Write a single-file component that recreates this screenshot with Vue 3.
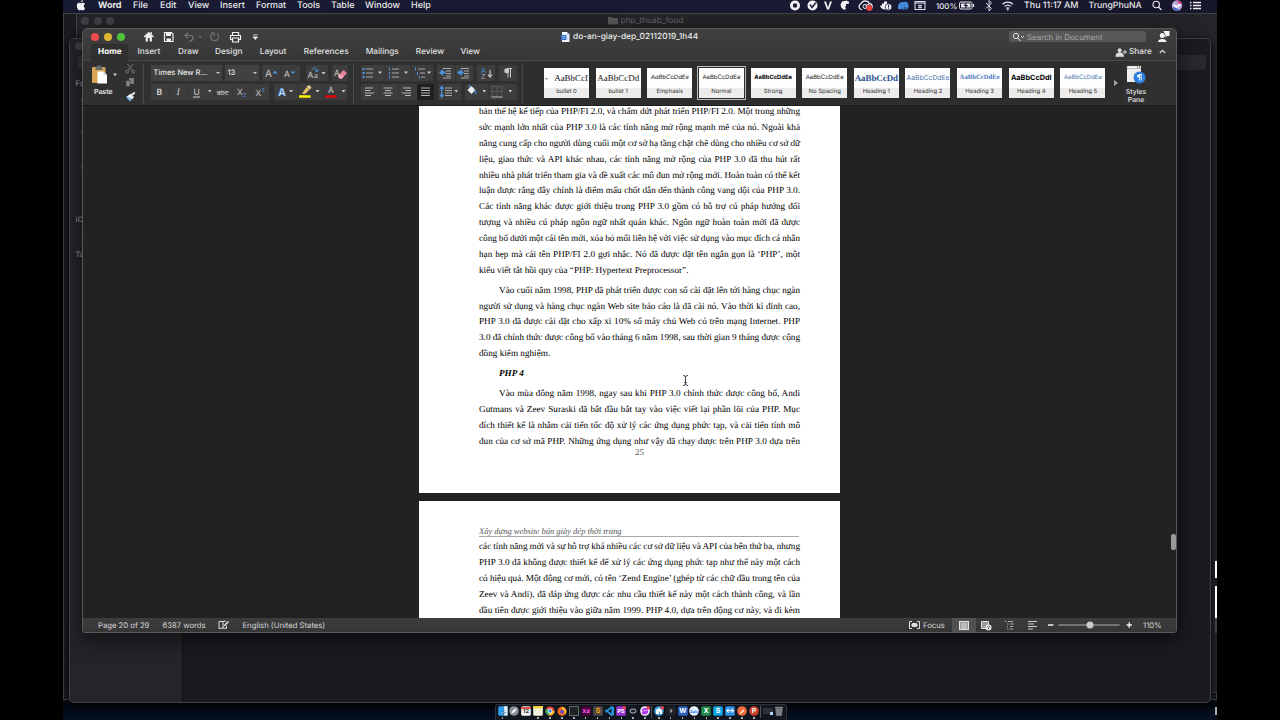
<script setup>
const menus = [
  ['Word', 35], ['File', 27], ['Edit', 28], ['View', 32], ['Insert', 36],
  ['Format', 41], ['Tools', 34], ['Table', 34], ['Window', 46], ['Help', 30],
]
const tabs = [
  ['Home', 39.5], ['Insert', 40.5], ['Draw', 37], ['Design', 44.7], ['Layout', 44],
  ['References', 62], ['Mailings', 50], ['Review', 44.7], ['View', 30],
]
const styles = [
  ['-   AaBbCcI', 'bullet 0', 'serif'],
  ['AaBbCcDd', 'bullet 1', 'serif'],
  ['AaBbCcDdEe', 'Emphasis', 'ital'],
  ['AaBbCcDdEe', 'Normal', ''],
  ['AaBbCcDdEe', 'Strong', 'strong'],
  ['AaBbCcDdEe', 'No Spacing', ''],
  ['AaBbCcDd', 'Heading 1', 'h1'],
  ['AaBbCcDdEe', 'Heading 2', 'h2'],
  ['AaBbCcDdEe', 'Heading 3', 'h3'],
  ['AaBbCcDdI', 'Heading 4', 'h4'],
  ['AaBbCcDdEe', 'Heading 5', 'h5'],
]
const paras = [
  { lines: [
    'bản thế hệ kế tiếp của PHP/FI 2.0, và chấm dứt phát triển PHP/FI 2.0. Một trong những',
    'sức mạnh lớn nhất của PHP 3.0 là các tính năng mở rộng mạnh mẽ của nó. Ngoài khả',
    'năng cung cấp cho người dùng cuối một cơ sở hạ tầng chặt chẽ dùng cho nhiều cơ sở dữ',
    'liệu, giao thức và API khác nhau, các tính năng mở rộng của PHP 3.0 đã thu hút rất',
    'nhiều nhà phát triển tham gia và đề xuất các mô đun mở rộng mới. Hoàn toàn có thể kết',
    'luận được rằng đây chính là điểm mấu chốt dẫn đến thành công vang dội của PHP 3.0.',
    'Các tính năng khác được giới thiệu trong PHP 3.0 gồm có hỗ trợ cú pháp hướng đối',
    'tượng và nhiều cú pháp ngôn ngữ nhất quán khác. Ngôn ngữ hoàn toàn mới đã được',
    'công bố dưới một cái tên mới, xóa bỏ mối liên hệ với việc sử dụng vào mục đích cá nhân',
    'hạn hẹp mà cái tên PHP/FI 2.0 gợi nhắc. Nó đã được đặt tên ngắn gọn là ‘PHP’, một',
    'kiểu viết tắt hồi quy của “PHP: Hypertext Preprocessor”.',
  ], ends: true },
  { indent: true, ends: true, lines: [
    'Vào cuối năm 1998, PHP đã phát triển được con số cài đặt lên tới hàng chục ngàn',
    'người sử dụng và hàng chục ngàn Web site báo cáo là đã cài nó. Vào thời kì đỉnh cao,',
    'PHP 3.0 đã được cài đặt cho xấp xỉ 10% số máy chủ Web có trên mạng Internet. PHP',
    '3.0 đã chính thức được công bố vào tháng 6 năm 1998, sau thời gian 9 tháng được cộng',
    'đồng kiểm nghiệm.',
  ] },
  { indent: true, ends: true, heading: true, lines: ['PHP 4'] },
  { indent: true, lines: [
    'Vào mùa đông năm 1998, ngay sau khi PHP 3.0 chính thức được công bố, Andi',
    'Gutmans và Zeev Suraski đã bắt đầu bắt tay vào việc viết lại phần lõi của PHP. Mục',
    'đích thiết kế là nhằm cải tiến tốc độ xử lý các ứng dụng phức tạp, và cải tiến tính mô',
    'đun của cơ sở mã PHP. Những ứng dụng như vậy đã chạy được trên PHP 3.0 dựa trên',
  ] },
]
const nextLines = [
  'các tính năng mới và sự hỗ trợ khá nhiều các cơ sở dữ liệu và API của bên thứ ba, nhưng',
  'PHP 3.0 đã không được thiết kế để xử lý các ứng dụng phức tạp như thế này một cách',
  'có hiệu quả. Một động cơ mới, có tên ‘Zend Engine’ (ghép từ các chữ đầu trong tên của',
  'Zeev và Andi), đã đáp ứng được các nhu cầu thiết kế này một cách thành công, và lần',
  'đầu tiên được giới thiệu vào giữa năm 1999. PHP 4.0, dựa trên động cơ này, và đi kèm',
]
const dock = [
  ['#2a9df0', '', '#fff', 'finder', 1], ['#888f96', '', '#fff', 'rocket', 0], ['#f4f4f4', '12', '#333', 'cal', 0],
  ['#f5f2dc', '', '#333', 'note', 1], ['#fff', '', '', 'chrome', 1], ['#f36b1c', '', '', 'fox', 1],
  ['#1c2421', '', '#9db', 'term', 1], ['#470137', 'Xd', '#ff61f6', 'txt', 1], ['#4a4a4a', 'S', '#ff9800', 'txt', 1],
  ['#1a1b1e', '', '#2a9df0', 'code', 1], ['#9c35d8', 'PS', '#fff', 'storm', 1], ['#191b22', '', '#a9b4d8', 'eye', 1],
  ['#fff', '', '#c22af0', 'msg', 1], null,
  ['#3f9fe0', '', '#fff', 'mamp', 1], ['#202225', '›', '#ddd', 'txt', 1], ['#2b5fc0', 'W', '#fff', 'txt', 1],
  ['#e9f1ff', 'Zalo', '#1877f2', 'zalo', 1], ['#1f8a4c', 'X', '#fff', 'txt', 1], ['#0fa4e8', 'S', '#fff', 'txt', 1],
  ['#2b8fe8', '↔', '#fff', 'tv', 1], ['#f26b3a', '', '#fff', 'post', 1], ['#c9412b', 'P', '#fff', 'round', 1], null,
  ['#20252b', '', '#9cf', 'mini', 0], ['#73777b', '', '#ccc', 'trash', 0],
]
</script>

<template>
  <div class="screen">
    <header class="menubar">
      <svg class="apple" width="10" height="12" viewBox="0 0 10 12"><path d="M6.900 0c.1 1.200-.9 2.300-2 2.300C4.800 1.200 5.800.2 6.900 0zM9 8.200c-.6 1.500-1.300 2.300-2.100 2.300-.7 0-.9-.4-1.700-.4s-1.100.4-1.700.4C2.300 10.500.8 8.200.8 5.800.8 3.900 2 2.800 3.200 2.800c.8 0 1.400.5 1.900.5s1.200-.6 2.200-.5c.7 0 1.300.3 1.700.9-1.800 1.100-1.500 3.700 0 4.500z" fill="#f2f2f6"/></svg>
      <nav class="menus"><span v-for="[t, w] in menus" :key="t" :style="{ width: w + 'px' }">{{ t }}</span></nav>
      <svg class="tray" width="146" height="13" viewBox="0 0 146 13">
        <g fill="#f0f0f5">
          <circle cx="5" cy="5.500" r="5"/><rect x="3" y="3.500" width="4" height="4" rx=".8" fill="#1a1b33"/>
          <circle cx="22.500" cy="5.500" r="5"/><path d="M20 4.500l2 3 3.800-4.800" stroke="#1a1b33" stroke-width="1.400" fill="none"/>
          <path d="M34 1.500h2l2 6 2-6h2L39 9.500h-2z"/>
          <path d="M50.500 4.500L52 1.500 56.500.5l2.500 1.300v2L56 4v2.500h-1.500L56 8l-1 2Q51 9 50.500 4.500z"/>
          <path d="M72 9.500a3 3 0 0 1-1-5.800 4.500 4.500 0 0 1 8.400 0 2.800 2.800 0 0 1 0 5.600" fill="none" stroke="#f0f0f5" stroke-width="1.200"/><circle cx="75" cy="6.500" r="2" fill="none" stroke="#f0f0f5"/><circle cx="78" cy="6.500" r="2" fill="none" stroke="#f0f0f5"/>
          <path d="M90 5.500h2V3.500h2V1.500h3v3h4v1c-1 3-2.500 4-5.500 4s-5-1.500-5.500-4z"/><circle cx="98.500" cy="7" r="3.300" stroke="#1a1b33" stroke-width=".7"/>
          <path d="M98.500 5v2.600M98.500 8.300v1" stroke="#1a1b33" fill="none"/>
        </g>
        <circle cx="79.500" cy="8" r="3" fill="#e9413d"/>
        <path d="M108 9V5.500C109 2.500 111 1.500 114 2c3-.8 4.500 1 4.500 3.500v2h-1V9.500h-2V7.500l-1-1v3h-2v-2l-1 2z" fill="#4389d9"/>
        <g fill="none" stroke="#e4e4ec"><rect x="125" y="1.500" width="10" height="8"/><path d="M125 3h10M128 5l4 3M132 5l-4 3M130 4.500v4"/></g>
      </svg>
      <span class="pct">100%</span>
      <svg class="stat" width="65" height="13" viewBox="0 0 65 13">
        <g fill="none" stroke="#e9e9ef">
          <rect x=".5" y="2" width="12.500" height="7" rx="1.500"/><path d="M14.500 4v3" stroke-width="1.200"/>
          <path d="M27 3l5.500 5.500L30 11V.5L32.500 3 27 8.500" stroke-width=".9"/>
          <path d="M43.500 4.200a7.500 7.500 0 0 1 10.500 0M45.500 6.400a5 5 0 0 1 6.500 0M47.300 8.300a2.500 2.500 0 0 1 2.900 0" stroke-width="1.200"/>
        </g>
        <rect x="2" y="3.500" width="9.500" height="4" fill="#e9e9ef"/><path d="M7.800 2L4.500 6h2L5.500 9.300 9.300 5H7z" fill="#1a1b33"/>
        <circle cx="48.800" cy="9.500" r=".9" fill="#e9e9ef"/>
      </svg>
      <span class="clock">Thu 11:17 AM</span><span class="user">TrungPhuNA</span>
      <svg class="trail" width="52" height="13" viewBox="0 0 52 13">
        <circle cx="4.200" cy="4.500" r="3.200" fill="none" stroke="#eee" stroke-width="1.100"/><path d="M6.500 7l3 3" stroke="#eee" stroke-width="1.200"/>
        <circle cx="25" cy="5.500" r="5.200" fill="#b7a7d6"/><path d="M21 5.500c2-3 3 1 4 0s2-4 4-1c-1 3-3 2-4 4-1 0-2-2-4-3z" fill="#f2f2ff"/><path d="M20.500 7a5 5 0 0 0 7 3c-2-.5-4-3-7-3z" fill="#3c68d8"/><path d="M25 .5a5 5 0 0 1 5 4l-4-1z" fill="#d94b8d"/>
        <path d="M38 2.500h1.500M38 5.500h1.500M38 8.500h1.500M41 2.500h8M41 5.500h8M41 8.500h8" stroke="#eee" stroke-width="1.300"/>
      </svg>
    </header>

    <div class="win rear"></div>
    <div class="win folder">
      <div class="dots"><i></i><i></i><i></i></div>
      <div class="folder-title"><svg width="10" height="9" viewBox="0 0 10 9"><path d="M0 1h4l1 1h5v6.500H0z" fill="#58595b"/></svg>php_thuab_food</div>
    </div>
    <div class="win finder">
      <aside class="side"><i class="sdot"></i><i class="sfield"></i><b class="s1">Favourites</b><b class="s2">iCloud</b><b class="tags">Tags</b>
        <svg class="sideicons" width="8" height="150" viewBox="0 0 8 150"><path d="M6 3q-3 2 0 5M5 21h3M4 38l3-3M6 50v10M6 67q-2 6 0 10M6 87v7M5 102h2v10H5M6 143q-2 2 0 5" fill="none" stroke="#85868a"/></svg>
      </aside>
      <div class="findermain"><i class="ffield"></i></div>
    </div>
    <div class="sliver a"></div><div class="sliver b"></div><div class="sliver c"></div><div class="sliver d"></div>

    <main class="word">
      <section class="titlebar">
        <div class="lights"><i class="r"></i><i class="y"></i><i class="g"></i></div>
        <svg class="quick" width="118" height="14" viewBox="0 0 118 14">
          <g fill="none" stroke="#f2f2f2" stroke-width="1.200">
            <path d="M1 7l4.800-4.500L10.600 7M8.300 4V2" /><path d="M2.700 6v5.500h2.200V8h1.800v3.500h2.200V6L5.800 3.200z" fill="#f2f2f2" stroke="none"/>
            <path d="M21.500 2.500h7L30 4v7.500h-8.500z"/><path d="M23 3h5v3h-5zM23.500 8.500h4.500V11h-4.500z" fill="#f2f2f2" stroke="none"/>
            <path d="M89.500 5.500V2.500h6v3M89 9.500h-1.500v-4h10v4H96M89.500 8h6v4h-6z"/>
          </g>
          <g fill="none" stroke="#747474" stroke-width="1.200"><path d="M45 2.500L42 5.500l3 3M42 5.500h5a2.500 2.500 0 0 1 1 5l-2 1.200"/><path d="M74 3.500a4 4 0 1 1-5 .2M68 3.200h3.200v3.300"/></g>
          <path d="M55.500 6h3.200l-1.600 2z" fill="#777"/><path d="M110 5h4.500M110 7h4.500l-2.200 2.500z" fill="#eee" stroke="#eee" stroke-width=".8"/>
        </svg>
        <div class="doctitle"><svg width="9" height="10" viewBox="0 0 9 10"><path d="M1 0h5l2.500 2.500V10H1z" fill="#eef5ff"/><path d="M6 0v2.500h2.500z" fill="#9bb8dd"/><rect y="3" width="5.500" height="5" fill="#326fc0"/><path d="M1 4.500h3.500M1 6.300h3.500M5.500 7h2M5.500 5h2" stroke="#a9d0ff" stroke-width=".7"/></svg>do-an-giay-dep_02112019_1h44</div>
        <div class="search"><svg width="15" height="10" viewBox="0 0 15 10"><circle cx="4" cy="4" r="2.600" fill="none" stroke="#ddd"/><path d="M6 6l2.500 3M9 4l1.500 1.500L12 4" fill="none" stroke="#ddd"/></svg>Search in Document</div>
        <svg class="feedback" width="12" height="13" viewBox="0 0 12 13"><circle cx="4.300" cy="5.500" r="2.500" fill="#f5f5f5"/><path d="M0 12c0-4 8.600-4 8.600 0zM5.500 1h6v5H9L7.500 7.500V5z" fill="#f5f5f5"/></svg>
      </section>
      <section class="tabs">
        <span v-for="([t, w], i) in tabs" :key="t" :class="{ on: i === 0 }" :style="{ width: w + 'px' }">{{ t }}</span>
        <div class="share"><svg width="11" height="10" viewBox="0 0 12 10"><circle cx="4" cy="3" r="2.200" fill="#ddd"/><path d="M0 9.500c0-5 8-5 8 0zM7.500 5h4.500M9.700 2.800v4.500" fill="#ddd" stroke="#ddd" stroke-width="1.100"/></svg>Share<svg class="chev" width="7" height="5" viewBox="0 0 7 5"><path d="M.8 4l2.700-2.700L6.200 4" fill="none" stroke="#ddd" stroke-width="1.200"/></svg></div>
      </section>

      <section class="ribbon">
        <div class="clip">
          <svg width="50" height="40" viewBox="0 0 50 40">
            <rect x="0" y="2" width="13.500" height="16" rx="1" fill="#d9a557"/><path d="M3.500 1.500h2a1.500 1.500 0 0 1 3 0h2V5h-7z" fill="#686a6c"/><path d="M5.500 6.500h6l3.500 3.500v8.500H5.500z" fill="#fff"/><path d="M11.500 6.500V10H15z" fill="#cfd3d8"/>
            <path d="M21 8.500h4l-2 2.800z" fill="#ccc"/>
            <g fill="none" stroke="#777" stroke-width="1"><path d="M35.500-1l5 6.500M41-1l-5 6.500"/><circle cx="35.300" cy="6.600" r="1.400"/><circle cx="41.200" cy="6.600" r="1.400"/></g>
            <path d="M37 13h5v6h-5z" fill="#7b7b7b"/><path d="M34 15.500h4v6h-4z" fill="#858585" stroke="#333" stroke-width=".5"/>
            <path d="M34 32l4-3 3.500 3-3.500 4.500z" fill="#86b7ef"/><path d="M35 31.500l3.500-2.500 3.500 3-1.500 2z" fill="#f3f3f3"/><path d="M39 30.500l3.800-3" stroke="#eee" stroke-width="1.900"/>
          </svg>
          <span>Paste</span>
        </div>
        <i class="sep"></i>
        <div class="cols fontcols">
          <div class="row">
            <div class="combo f1">Times New R...<em></em></div>
            <div class="combo f2">13<em></em></div>
            <svg class="grp m3" width="38" height="16"><path d="M19.500 0v16" class="div"/><text x="3" y="12" class="gl">A</text><path d="M10.500 8.500h5L13 5.500z" fill="#4b93e0"/><text x="22" y="12" class="gs">A</text><path d="M28.500 6.500h5L31 9z" fill="#4b93e0"/></svg>
            <svg class="grp m6" width="22" height="16"><text x="1.500" y="12.500" class="gs">A</text><text x="8" y="13" class="gt">a</text><path d="M6 5c2-4 5-2 5 1M9 5l2 2 1.500-2.500" fill="none" stroke="#4b93e0"/><path d="M15.500 7h4l-2 2.500z" fill="#ccc"/></svg>
            <svg class="grp m4" width="16" height="16"><text x="2" y="10.500" class="gs">A</text><path d="M6 11l5.500-6 3.500 3-5 5.500H7.500z" fill="#e8829b"/><path d="M6 11l2-2 3.500 3-1.500 1.500H7.500z" fill="#f4afbf"/></svg>
          </div>
          <div class="row">
            <svg class="grp" width="118" height="16"><path d="M18.500 0v16M37.500 0v16M63.500 0v16M81.500 0v16M100.500 0v16" class="div"/>
              <text x="5.500" y="11.300" class="gb">B</text><text x="25.500" y="11.300" class="gi">I</text><text x="42.500" y="10.500" class="gu">U</text><path d="M42 13h7" stroke="#ccc"/><path d="M57 6h3.500l-1.700 2.500z" fill="#ccc"/>
              <text x="66" y="10.500" class="ge">abc</text><path d="M65.500 8h12.500" stroke="#bbb" stroke-width=".8"/><text x="86" y="10.500" class="gu">X</text><text x="92" y="12.500" class="gq">2</text><text x="104.500" y="11.500" class="gu">X</text><text x="110.500" y="7.500" class="gq">2</text></svg>
            <svg class="grp m5" width="73" height="16"><path d="M24.500 0v16M49.500 0v16" class="div"/><text x="4" y="11.500" class="ga">A</text><path d="M15 6h4l-2 2.500z" fill="#ccc"/>
              <path d="M28 9.500l4.500-6 3 2-4.500 4.500z" fill="#ecc46f"/><path d="M32.500 3l2.500-2L37.500 3.500l-1.500 2z" fill="#e8cf9a"/><path d="M25 12.500h11.500" stroke="#fbf000" stroke-width="2.700"/><path d="M41.500 6h4l-2 2.500z" fill="#ccc"/>
              <text x="54" y="9" class="gs">A</text><path d="M51 12.500h11.500" stroke="#e00a0a" stroke-width="2.700"/><path d="M67.500 6h4l-2 2.500z" fill="#ccc"/></svg>
          </div>
        </div>
        <i class="sep"></i>
        <div class="cols">
          <div class="row">
            <svg class="grp" width="72" height="16"><path d="M24.500 0v16M50.500 0v16" class="div"/>
              <path d="M5 4h7M5 8h7M5 12h7M31 4h7M31 8h7M31 12h7M57 4h7M59 8h5M60 12h4" stroke="#aaa" stroke-width="1.100"/><path d="M1.500 4h2.200M1.500 8h2.200M1.500 12h2.200" stroke="#4b93e0" stroke-width="2"/><path d="M28.500 2.500v3M28.500 7v2.500M28.500 11v2.500M54.500 2.500v3M56.500 7v3M58.500 11v2.500" stroke="#4b93e0"/><path d="M17 6.500h4l-2 2.500zM43 6.500h4l-2 2.500zM66 6.500h4l-2 2.500z" fill="#ccc"/></svg>
            <svg class="grp m4b" width="36" height="16"><path d="M18.500 0v16" class="div"/><path d="M6 3.500h8M9 6h5M9 8.500h5M9 11h5M6 13h8M24 3.500h8M27 6h5M27 8.500h5M27 11h5M24 13h8" stroke="#aaa"/><path d="M2 7.500L6 4v2.200h2.500v2.600H6V11zM27 7.500L23 4v2.200h-2.500v2.600H23V11z" fill="#4b93e0"/></svg>
            <svg class="grp m4b" width="18" height="16"><text x="4" y="7.500" class="gz">A</text><text x="4" y="14" class="gz2">Z</text><path d="M13 5v6.500M11 9.500l2 2.500 2-2.500" fill="none" stroke="#ccc" stroke-width="1.200"/></svg>
            <svg class="grp m4b" width="18" height="16"><path d="M9 3.500v9M11.500 3.500v9M8 3.500h5" stroke="#c9c9c9" fill="none"/><circle cx="7.700" cy="5.700" r="2.500" fill="#c9c9c9"/></svg>
          </div>
          <div class="row">
            <svg class="grp" width="73" height="16"><rect x="56" width="17" height="16" fill="#1f1f1f"/><path d="M18.500 0v16M37.500 0v16" class="div"/><path d="M4 4h8M4 6.500h5.500M4 9h9M4 11.500h6M22.500 4h9M24 6.500h6M22.500 9h9M24 11.500h6M42 4h8M44.500 6.500H50M41 9h9M44 11.500h6M60 4h9M60 6.500h9M60 9h9M60 11.500h9" stroke="#b8b8b8"/></svg>
            <svg class="grp m4b" width="23" height="16"><path d="M7 4h7M7 6.500h7M7 9h7M7 11.500h7" stroke="#aaa"/><path d="M2 5l1.700-2.500L5.500 5M2 10.500l1.700 2.500L5.500 10.500M3.700 3v9.500" fill="none" stroke="#4b93e0" stroke-width="1.300"/><path d="M16.500 6h3.500l-1.700 2.500z" fill="#ccc"/></svg>
            <svg class="grp m4b" width="52" height="16"><path d="M23.500 0v16" class="div"/><path d="M2.500 6l4-4 4 4-4 4z" fill="#eee"/><path d="M4.500 4V1M8.500 6c2 0 2.500 2 2 4" fill="none" stroke="#4b93e0" stroke-width="1.200"/><path d="M17.500 6h3.500l-1.700 2.500zM43.500 6h3.500l-1.700 2.500z" fill="#ccc"/><path d="M27 2.500h10v9M32 2.500v10M27 2.500v10M27 7.500h10" fill="none" stroke="#666" stroke-width=".7"/><path d="M26.500 13h11" stroke="#bbb"/></svg>
          </div>
        </div>
        <i class="sep last-sep"></i>
        <div class="gallery">
          <div v-for="([s, n, k], i) in styles" :key="n" class="card" :class="[k, { sel: i === 3 }]"><div class="prev"><span>{{ s }}</span></div><div class="name">{{ n }}</div></div>
          <svg width="5" height="6" viewBox="0 0 5 6" class="more"><path d="M0 0l4 3L0 6z" fill="#a5a5a5"/></svg>
        </div>
        <div class="pane"><svg width="20" height="20" viewBox="0 0 20 20"><rect x="1" y="1" width="14" height="16" fill="#efefef"/><path d="M1 1h14v2.500H1z" fill="#fff" stroke="#777" stroke-width=".5"/><path d="M11 2.200h1M13 2.200h1" stroke="#444"/><circle cx="13.500" cy="12.500" r="6" fill="#2f7fe0"/><path d="M13.500 9.500v6M15.200 9.500v6M13 9.500h3" stroke="#fff" stroke-width=".9"/><circle cx="12.500" cy="11" r="1.500" fill="#fff"/></svg><span>Styles<br>Pane</span></div>
      </section>

      <section class="doc">
        <article class="page p1">
          <p v-for="(p, pi) in paras" :key="pi" :class="{ indent: p.indent, heading: p.heading }">
            <span v-for="(l, i) in p.lines" :key="i" class="line" :class="{ last: p.ends && i === p.lines.length - 1 }">{{ l }}</span>
          </p>
          <div class="num">25</div>
        </article>
        <article class="page p2">
          <div class="head">Xây dựng website bán giày dép thời trang</div>
          <p><span v-for="l in nextLines" :key="l" class="line">{{ l }}</span></p>
        </article>
        <i class="thumb"></i>
        <svg class="caret" width="7" height="11" viewBox="0 0 7 11"><path d="M1 .5q2.500 0 2.500 1.500Q3.500.5 6 .5M1 10.500q2.500 0 2.500-1.500 0 1.500 2.500 1.500M3.500 2v7M2.200 7.500h2.600" fill="none" stroke="#333" stroke-width=".9"/></svg>
      </section>

      <footer class="status">
        <span class="w1">Page 20 of 29</span><span class="w2">6387 words</span>
        <svg class="book" width="12" height="10" viewBox="0 0 12 10"><path d="M8.500 5.500V8.500L5 8 1 8.500v-7L5 1.500v7M5 1.500L8 1" fill="none" stroke="#ddd"/><path d="M5.500 6.500l1-2 3.500-3.500 1 1-3.500 3.500z" fill="#eee"/></svg>
        <span>English (United States)</span>
        <div class="views">
          <svg width="11" height="8" viewBox="0 0 11 8"><path d="M3 .5H.5v7H3M8 .5h2.500v7H8" fill="none" stroke="#ddd"/><rect x="2.500" y="2" width="6" height="4" rx="1.500" fill="#ddd"/></svg><span class="focus">Focus</span>
          <div class="vsel"><svg width="10" height="9" viewBox="0 0 10 9"><rect x=".5" y=".5" width="9" height="8" fill="#999" stroke="#e2e2e2"/><path d="M2 3h6M2 5h6M2 7h6" stroke="#f0f0f0" stroke-width=".8"/></svg></div>
          <svg class="vicons" width="66" height="11" viewBox="0 0 66 11"><path d="M6.500 1.500h7v7h-7z" fill="#999" stroke="#ddd"/><circle cx="13.500" cy="7.500" r="3" fill="#eee"/><path d="M12 6.500l1.500 1v2M14 5.500l1 2" stroke="#444" stroke-width=".8" fill="none"/><path d="M30 1.500h1.500M33 1.500h5M32 4h1.500M35 4h4M32 6.500h1M35 6.500h3M32 9h1.500M35 9h3" stroke="#aaa" stroke-width="1.200"/><path d="M53 1.500h9M53 4h6M53 6.500h9M53 9h5" stroke="#ccc" stroke-width="1.200"/></svg>
          <svg width="85" height="10" viewBox="0 0 85 10"><path d="M1 5h5.500M79.500 5h5.500M82.200 2.300v5.400" stroke="#eee" stroke-width="1.400"/><path d="M12 5h60" stroke="#747474" stroke-width="1.800" stroke-linecap="round"/><circle cx="43" cy="5" r="3.500" fill="#ccc"/></svg>
          <span class="zoom">110%</span>
        </div>
      </footer>
    </main>

    <footer class="dock">
      <template v-for="(d, i) in dock" :key="i">
        <i v-if="!d" class="dsep"></i>
        <div v-else class="app" :class="{ run: d[4] }">
          <svg width="10" height="10" viewBox="0 0 10 10">
            <template v-if="d[3] === 'chrome'"><circle cx="5" cy="5" r="4.600" fill="#e84435"/><path d="M5 5L1 2.700A4.600 4.600 0 0 0 4 9.500z" fill="#34a853"/><path d="M5 5h4.600A4.600 4.600 0 0 1 4 9.500z" fill="#fbc116"/><circle cx="5" cy="5" r="2.100" fill="#4285f4" stroke="#fff" stroke-width=".8"/></template>
            <template v-else-if="d[3] === 'fox'"><circle cx="5" cy="5.300" r="4.500" fill="#f36b1c"/><path d="M5 1c4 1 5 4 3.500 7C7 6 8 4 5 3z" fill="#ffcb35"/><circle cx="5" cy="5.800" r="2" fill="#6b48c8"/></template>
            <template v-else-if="d[3] === 'code'"><path d="M7.500 0L10 1v8l-2.500 1L1 4.500 2 3.300 7.500 7.500v-5L2 6.700 1 5.500z" fill="#2595df"/></template>
            <template v-else-if="d[3] === 'trash'"><path d="M1 1h8L8 10H2z" fill="#65696d"/><path d="M1 1.200h8M3 3l.5 6M5 3v6M7 3l-.5 6" stroke="#aaa" stroke-width=".6"/></template>
            <template v-else-if="d[3] === 'mini'"><rect y="2" width="10" height="6" fill="#2b3138"/><rect x="7" y="6" width="3" height="3" fill="#b7d7f4"/></template>
            <template v-else>
              <circle v-if="['rocket','msg','mamp','post','round','zalo'].includes(d[3])" cx="5" cy="5" r="4.800" :fill="d[0]"/>
              <rect v-else x=".2" y=".2" width="9.600" height="9.600" rx="1.600" :fill="d[0]"/>
              <path v-if="d[3] === 'finder'" d="M5.500 0H9.800v9.800H5.800L5 6h1zM2 6.500q3 2.500 6 0" fill="#e4eff8" stroke="#24557f" stroke-width=".5"/>
              <path v-if="d[3] === 'rocket'" d="M2 8l2-4 4-2-2 4z" fill="#f3f3f3"/>
              <path v-if="d[3] === 'cal'" d="M0 1h10v2H0z" fill="#e04d45"/>
              <path v-if="d[3] === 'note'" d="M0 0h10v2.500H0z" fill="#f4ce3c"/>
              <path v-if="d[3] === 'term'" d="M.5.5h9v9h-9z" fill="none" stroke="#86908a" stroke-width=".7"/>
              <ellipse v-if="d[3] === 'eye'" cx="5" cy="5" rx="3" ry="2" fill="none" stroke="#a9b4d8"/>
              <path v-if="d[3] === 'msg'" d="M1.500 5a3.500 3.500 0 1 1 3 3.500L2 9zM2.500 6l2-2 1 1 2-1" fill="#ad34ef" stroke="#fff" stroke-width=".6"/>
              <path v-if="d[3] === 'mamp'" d="M2 8V4l3-2 3 2v4H6V6L5 5v3z" fill="#fff"/>
              <path v-if="d[3] === 'post'" d="M2.500 7.500l4-4 1 1-4 3.500z" fill="#fff"/>
              <text x="5" y="7.300" text-anchor="middle" :font-size="d[3] === 'zalo' ? 3.800 : d[1].length > 1 ? 5.500 : 7" font-weight="700" :fill="d[2]">{{ d[1] }}</text>
              <circle v-if="['storm','msg','mamp'].includes(d[3])" cx="8.300" cy="1.700" r="1.700" fill="#ee3c43"/>
            </template>
          </svg>
        </div>
      </template>
    </footer>
  </div>
</template>

<style>
html, body { margin: 0; background: #000; overflow: hidden; }
</style>
<style scoped>
* { box-sizing: border-box; }
.screen { position: relative; width: 1154px; height: 720px; margin-left: 63px; overflow: hidden; background: linear-gradient(#10111a 0, #10111a 700px, #020812 704px, #051022 720px); font-family: Inter, "Liberation Sans", sans-serif; color: #e8e8e8; text-rendering: geometricPrecision; }
i, em, b { font-style: normal; }
svg { display: block; flex: none; overflow: visible; }
.menubar { display: flex; align-items: center; height: 13px; padding-bottom: 2px; background: linear-gradient(90deg, #171b31, #1a1a33 60%, #16162a); font-size: 9px; font-weight: 500; white-space: nowrap; }
.apple { margin-left: 13px; }
.menus { display: flex; width: 348px; margin-left: 12px; }
.menus span { flex: none; }
.menus span:first-child { font-weight: 700; }
.tray { margin-left: 344px; margin-top: 2px; }
.pct { width: 20px; margin-left: 0; font-size: 7.900px; }
.stat { margin: 2px 0 0 3px; }
.clock { width: 55px; margin-left: 0; font-size: 8.900px; }
.user { width: 54px; margin-left: 9.500px; font-size: 8.700px; }
.trail { margin: 2px 0 0 9.500px; }
.win { position: absolute; border: 1px solid #414246; }
.rear { left: 0; top: 13px; width: 1154px; height: 687px; background: #1b1c1f; }
.folder { left: 13px; top: 13px; width: 1142px; height: 680px; background: #242528; }
.dots { display: flex; gap: 4.700px; padding: 2.500px 0 0 4px; }
.dots i { width: 8px; height: 8px; border-radius: 50%; background: #414245; }
.folder-title { display: flex; gap: 3px; align-items: center; justify-content: center; margin: -10px 3px 0 0; font-size: 8.300px; line-height: 12px; color: #66676a; }
.finder { left: 6px; top: 38px; width: 1142px; height: 665px; display: flex; background: #1a1b1f; border-radius: 5px; box-shadow: 0 2px 8px #000; }
.side { position: relative; width: 113px; background: #242529; border-right: 1px solid #111; font-size: 7.500px; color: #96979b; overflow: hidden; border-radius: 5px 0 0 5px; }
.side b { position: absolute; left: 5.500px; font-weight: 500; }
.s1 { top: 40px; } .s2 { top: 176px; } .tags { top: 211px; }
.sdot { position: absolute; left: 5px; top: 3px; width: 8px; height: 8px; border-radius: 50%; background: #424347; }
.sfield { position: absolute; left: 8px; top: 17px; width: 30px; height: 13px; background: #333438; }
.sideicons { position: absolute; left: 7px; top: 56px; }
.findermain { flex: 1; display: flex; justify-content: flex-end; padding: 16px 4px 0 0; }
.ffield { width: 60px; height: 15px; background: #28292d; border-radius: 2px; }
.sliver { position: absolute; left: 1152px; width: 2px; background: #fff; }
.a { top: 561px; height: 17px; } .b { top: 586px; height: 32px; } .c { top: 618px; height: 15px; background: #444; } .d { top: 707px; height: 8px; background: #aaa; }

.word { position: absolute; left: 19px; top: 28px; width: 1095px; height: 605px; display: flex; flex-direction: column; background: #222; border: 1px solid #58595a; border-radius: 5px 5px 3px 3px; overflow: hidden; box-shadow: 0 6px 20px 2px rgba(0,0,0,.5); }
.titlebar { display: flex; flex: none; height: 15px; align-items: center; background: linear-gradient(#404040, #3c3c3c); }
.lights { display: flex; gap: 5px; margin-left: 7.500px; width: 52px; }
.lights i { width: 8px; height: 8px; border-radius: 50%; }
.r { background: #ee4c4a; } .y { background: #dfb62f; } .g { background: #4fc23a; }
.quick { margin-left: .5px; }
.doctitle { display: flex; gap: 3px; align-items: center; width: 140px; margin-left: 300px; font-size: 8.350px; font-weight: 500; white-space: nowrap; color: #e9e9e9; }
.search { display: flex; align-items: center; width: 137px; height: 11.500px; margin-left: 308px; padding-left: 3px; background: #585858; border-radius: 2px; color: #a8a8a8; font-size: 7.900px; white-space: nowrap; }
.feedback { margin-left: 11.500px; }
.tabs { display: flex; flex: none; align-items: center; height: 17px; padding-left: 15px; border-bottom: 1px solid #484848; background: linear-gradient(#3c3c3c, #363636); font-size: 8.300px; font-weight: 500; color: #e0e0e0; }
.tabs > span { flex: none; }
.tabs .on { font-weight: 700; color: #fff; position: relative; z-index: 0; }
.tabs .on::before { content: ""; position: absolute; z-index: -1; left: -7px; top: -3px; width: 37px; height: 17px; background: #303030; }
.share { display: flex; align-items: center; margin: -1px 10px 0 auto; gap: 2px; font-size: 8.300px; }
.chev { margin-left: 5px; }
.ribbon { display: flex; flex: none; height: 45px; background: #303030; border-bottom: 1px solid #191919; }
.clip { position: relative; width: 60px; padding: 4px 0 0 9px; font-size: 6.900px; font-weight: 600; }
.clip span { position: absolute; left: 11px; top: 26px; }
.sep { flex: none; width: 1px; height: 41px; margin-top: 2px; background: #484848; }
.cols { display: flex; flex: none; flex-direction: column; gap: 3.500px; padding: 3.500px 0 0 7px; }
.fontcols { width: 209px; }
.row { display: flex; }
.grp { height: 16px; background: #3d3d3d; border-radius: 1px; }
.m3 { margin-left: 3px; } .m6 { margin-left: 6px; } .m4 { margin-left: 4px; } .m5 { margin-left: 5px; } .m4b { margin-left: 4px; }
.div { stroke: #343434; fill: none; }
.combo { height: 16px; background: #414141; font-size: 7.500px; line-height: 15.500px; padding-left: 2.500px; position: relative; white-space: nowrap; font-weight: 500; }
.combo em { position: absolute; right: 2.500px; top: 7px; border: 2px solid transparent; border-top: 2.800px solid #ccc; border-bottom: 0; }
.f1 { width: 71px; } .f2 { width: 34px; margin-left: 3px; }
.grp text { fill: #c9c9c9; font-family: Inter, sans-serif; }
.grp .gl { font-size: 10px; } .grp .gs { font-size: 8.500px; } .grp .gt { font-size: 7px; }
.grp .gb { font-size: 8.500px; font-weight: 700; } .grp .gi { font: italic 10px "Liberation Serif", serif; } .grp .gu { font-size: 8.500px; }
.grp .ge { font-size: 6.600px; } .grp .gq { font-size: 5.500px; fill: #4b93e0; } .grp .ga { font-size: 10.500px; font-weight: 700; fill: #e1f1ff; stroke: #2f7bd0; stroke-width: .5px; }
.grp .gz { font-size: 7px; fill: #4b93e0; } .grp .gz2 { font-size: 7px; fill: #aaa; }
.last-sep { margin-left: 5px; }
.gallery { display: flex; flex: none; align-items: flex-start; gap: 6.650px; width: 597px; height: 41px; margin: 2px 0 0 4px; padding: 4.500px 0 0 17px; background: #2d2d2d; }
.card { flex: none; width: 45px; height: 30px; background: #fdfdfd; color: #222; text-align: center; }
.sel { outline: 1px solid #bbb; outline-offset: 1.500px; }
.prev { display: flex; justify-content: center; align-items: center; height: 20px; overflow: hidden; font-size: 6px; line-height: 20px; white-space: pre; }
.name { height: 10px; font-size: 5.900px; line-height: 8.500px; background: #ececec; color: #333; white-space: nowrap; }
.serif .prev { font: 9px/20px "Liberation Serif", serif; }
.ital .prev { font-style: italic; } .strong .prev { font-weight: 700; color: #000; font-size: 5.800px; }
.h1 .prev { font: bold 8.900px/20px "Liberation Serif", serif; color: #274f8f; }
.h2 .prev { font-size: 6.800px; color: #4c78ad; }
.h3 .prev { font: bold 6.700px/20px "Liberation Serif", serif; color: #4a78bb; }
.h4 .prev { font-size: 7.300px; font-weight: 700; color: #000; } .h5 .prev { color: #4c78ad; }
.more { margin: 12px 0 0 2px; }
.pane { display: flex; flex-direction: column; align-items: center; width: 30px; margin-left: -3px; padding-top: 4px; font-size: 6.900px; font-weight: 500; line-height: 8px; text-align: center; }
.pane svg { margin-bottom: 2.500px; }
.doc { position: relative; flex: none; height: 512px; overflow: hidden; background: #222; }
.page { width: 421px; margin-left: 336px; padding: 0 40px 0 60px; background: #fff; color: #000; font: 9.200px/15.880px "Liberation Serif", serif; }
.p1 { height: 389px; margin-top: -2px; }
.page p { margin: 0 0 4.100px; }
.line { display: block; width: 321px; white-space: nowrap; text-align: justify; text-align-last: justify; word-spacing: -.4px; }
.last { text-align-last: left; word-spacing: 0; }
.indent .line:first-child { padding-left: 20px; }
.heading { font-weight: 700; font-style: italic; }
.num { margin-top: -8px; width: 321px; text-align: center; font-size: 8.800px; line-height: 12px; color: #555; }
.p2 { margin-top: 8px; height: 130px; padding-top: 24px; }
.head { width: 320px; height: 12px; line-height: 13px; font-size: 8.500px; font-style: italic; color: #555; border-bottom: 1px solid #aaa; margin-bottom: 2px; }
.thumb { position: absolute; right: 0; top: 428px; width: 5px; height: 16px; border-radius: 2px; background: #999; }
.caret { position: absolute; left: 599px; top: 269px; }
.status { display: flex; align-items: center; flex: 1; padding-left: 15px; background: linear-gradient(#3d3d3d, #363636); font-size: 7.700px; white-space: nowrap; color: #d7d7d7; }
.w1 { width: 64.500px; } .w2 { width: 55px; }
.book { margin-right: 13px; }
.views { display: flex; align-items: center; margin-left: auto; height: 100%; padding-right: 13px; }
.focus { width: 29px; margin-left: 3px; }
.vsel { display: grid; place-items: center; width: 24px; height: 100%; background: #505050; }
.vicons { margin-right: 6px; margin-left: -1px; }
.zoom { margin-left: 11px; width: 20px; }
.dock { position: absolute; left: 432px; top: 704px; width: 292px; height: 18px; display: flex; padding: 1px 1px 0; background: #11161e; border: 1px solid #30343a; border-radius: 2px; justify-content: space-between; }
.app { width: 11px; display: flex; flex-direction: column; align-items: center; }
.run::after { content: ""; width: 1.500px; height: 1.500px; margin-top: 1px; border-radius: 50%; background: #ccc; }
.dsep { width: 1px; height: 12px; background: #555; }
</style>
